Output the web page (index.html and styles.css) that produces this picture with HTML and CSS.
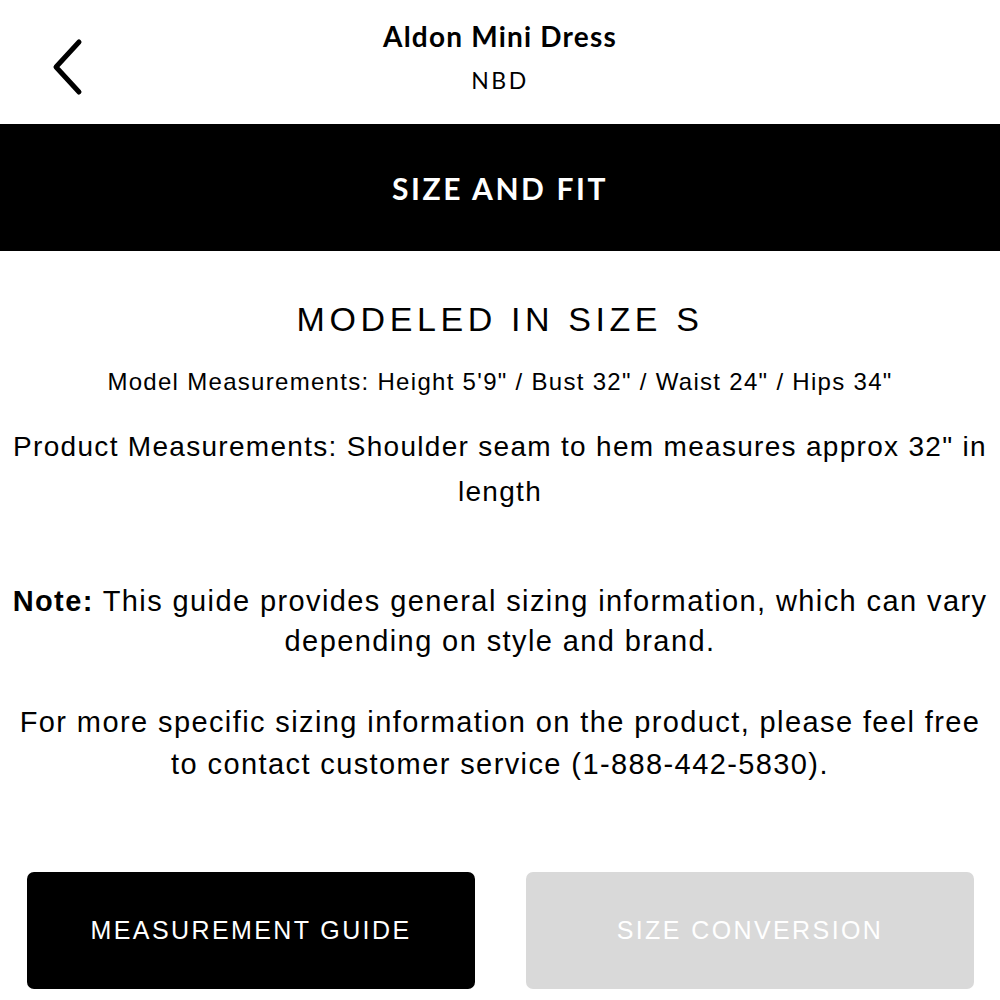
FILE: index.html
```html
<!DOCTYPE html>
<html lang="en">
<head>
    <meta charset="UTF-8">
    <meta name="viewport" content="width=device-width, initial-scale=1.0">
    <title>Size and Fit</title>
    <link rel="stylesheet" href="styles.css">
</head>
<body>
    <!-- Top navigation with back arrow and product name -->
    <header class="top-bar">
        <a class="back-link" href="#" aria-label="Back">
            <svg width="34" height="58" viewBox="0 0 34 58">
                <polyline points="29,4 6,29 29,54" fill="none" stroke="#000" stroke-width="5" stroke-linecap="round" stroke-linejoin="round"/>
            </svg>
        </a>
        <div class="product-info">
            <h1 class="product-name">Aldon Mini Dress</h1>
            <p class="brand">NBD</p>
        </div>
    </header>

    <!-- Section banner -->
    <div class="banner">SIZE AND FIT</div>

    <!-- Size and fit details -->
    <main class="fit-details">
        <h2 class="modeled-size">MODELED IN SIZE S</h2>
        <p class="model-measure">Model Measurements: Height 5'9" / Bust 32" / Waist 24" / Hips 34"</p>
        <p class="product-measure">Product Measurements: Shoulder seam to hem measures approx 32" in length</p>
        <p class="note"><strong>Note:</strong> This guide provides general sizing information, which can vary depending on style and brand.</p>
        <p class="note contact">For more specific sizing information on the product, please feel free to contact customer service (1-888-442-5830).</p>
    </main>

    <!-- Bottom action buttons -->
    <div class="actions">
        <button class="btn btn-dark">MEASUREMENT GUIDE</button>
        <button class="btn btn-light">SIZE CONVERSION</button>
    </div>
</body>
</html>
```

FILE: styles.css
```css
/* General body styles */
body {
    font-family: "Liberation Sans", Arial, sans-serif;
    margin: 0;
    padding: 0;
    background: #ffffff;
    color: #000000;
    width: 1000px;
}

/* Header styles */
.top-bar {
    position: relative;
    height: 124px;
    display: flex;
    justify-content: center;
}

.back-link {
    position: absolute;
    left: 50px;
    top: 38px;
}

.product-info {
    text-align: center;
    padding-top: 19px;
}

.product-name {
    font-family: Lato, "Liberation Sans", sans-serif;
    font-size: 28px;
    font-weight: 700;
    letter-spacing: 1.2px;
    margin: 0;
    line-height: 34px;
}

.brand {
    font-family: Lato, "Liberation Sans", sans-serif;
    font-size: 23px;
    margin: 15px 0 0;
    line-height: 24px;
    letter-spacing: 2.5px;
}

/* Black section banner */
.banner {
    height: 127px;
    background: #000000;
    color: #ffffff;
    font-family: Lato, "Liberation Sans", sans-serif;
    font-weight: 700;
    font-size: 30px;
    letter-spacing: 2.6px;
    display: flex;
    align-items: center;
    justify-content: center;
}

/* Details text block */
.fit-details {
    text-align: center;
    padding: 45px 10px 0;
}

.modeled-size {
    font-size: 34px;
    font-weight: 400;
    letter-spacing: 4.6px;
    margin: 0;
    line-height: 46px;
}

.model-measure {
    font-size: 24px;
    letter-spacing: 1.3px;
    margin: 25px 0 0;
    line-height: 30px;
}

.product-measure {
    font-size: 28px;
    letter-spacing: 1.3px;
    line-height: 45px;
    margin: 27px 0 0;
}

.note {
    font-size: 29px;
    line-height: 40px;
    margin: 67px 0 0;
    letter-spacing: 1.4px;
}

.note.contact {
    line-height: 42px;
    margin-top: 40px;
}

/* Button row */
.actions {
    display: flex;
    gap: 51px;
    padding: 0 26px 0 27px;
    margin-top: 87px;
}

.btn {
    flex: 1;
    height: 117px;
    border: none;
    border-radius: 7px;
    font-family: "Liberation Sans", Arial, sans-serif;
    font-size: 25px;
    letter-spacing: 2.4px;
    color: #ffffff;
}

.btn-dark {
    background: #000000;
}

.btn-light {
    background: #d9d9d9;
}
```
